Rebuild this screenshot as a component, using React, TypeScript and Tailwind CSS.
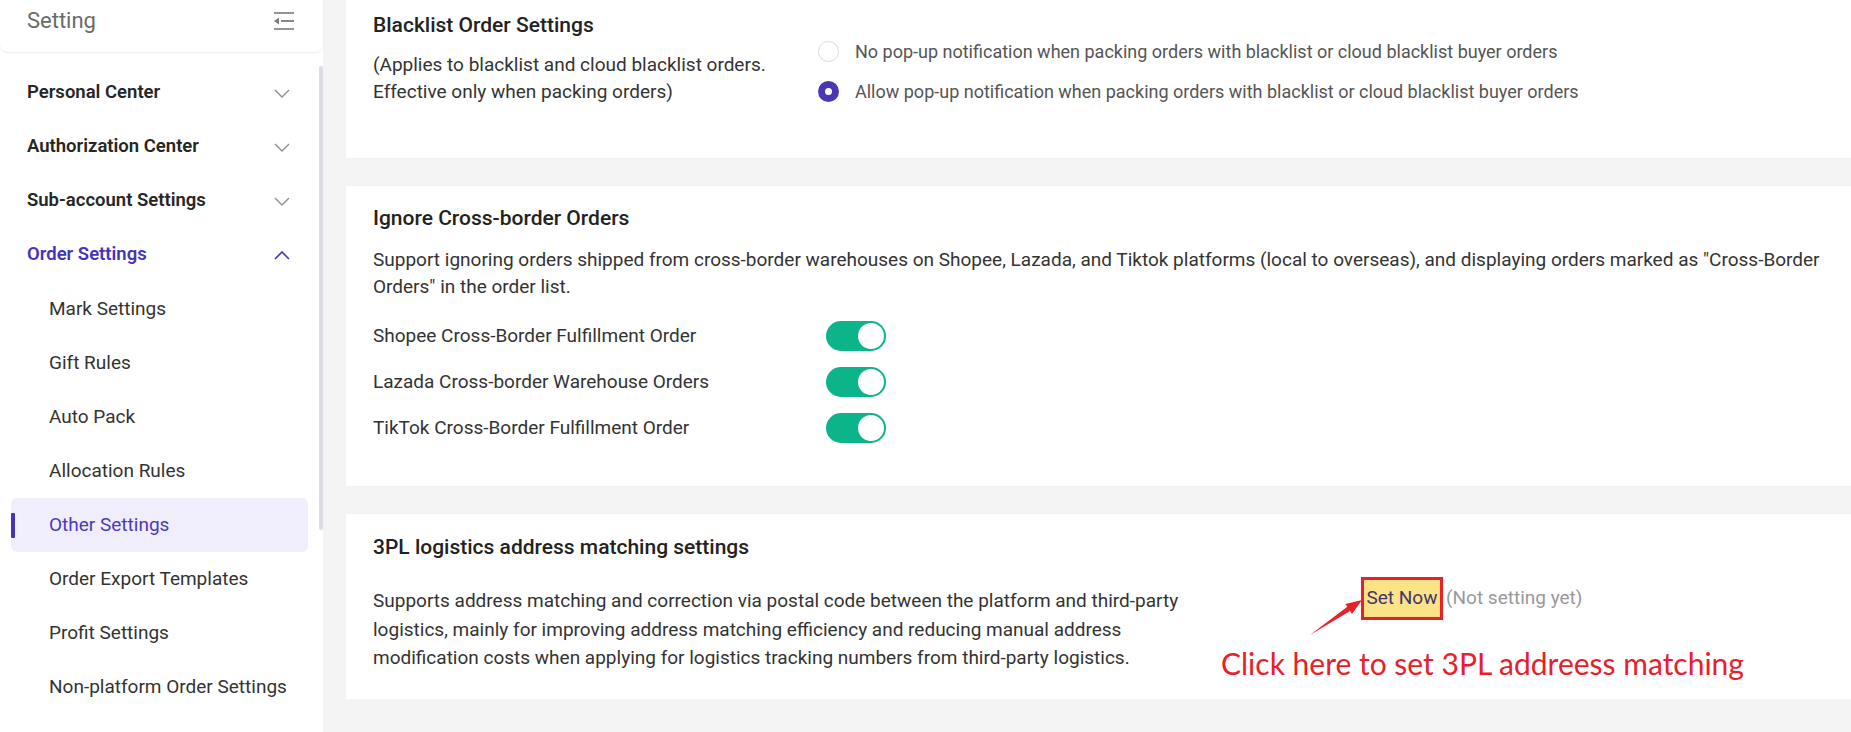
import React from "react";

const ChevronDown = () => (
  <svg width="16" height="9" viewBox="0 0 16 9" fill="none">
    <path d="M1 1l7 7 7-7" stroke="currentColor" strokeWidth="1.3" />
  </svg>
);
const ChevronUp = () => (
  <svg width="16" height="9" viewBox="0 0 16 9" fill="none">
    <path d="M1 8l7-7 7 7" stroke="currentColor" strokeWidth="1.6" />
  </svg>
);

const CollapseIcon = () => (
  <svg width="20" height="18" viewBox="0 0 20 18" fill="none">
    <path d="M0 1h20" stroke="#7a7a7a" strokeWidth="1.6" />
    <path d="M0 17h20" stroke="#7a7a7a" strokeWidth="1.6" />
    <path d="M7 9h13" stroke="#7a7a7a" strokeWidth="1.8" />
    <path d="M0 9l5-3.5v7z" fill="#7a7a7a" />
  </svg>
);

const Toggle = () => (
  <div className="flex h-[30px] w-[60px] items-center justify-end rounded-full bg-[#0cb489] pr-[2px]">
    <div className="h-[26px] w-[26px] rounded-full bg-white" />
  </div>
);

const topMenu = ["Personal Center", "Authorization Center", "Sub-account Settings"];
const subMenu = [
  "Mark Settings",
  "Gift Rules",
  "Auto Pack",
  "Allocation Rules",
  "Other Settings",
  "Order Export Templates",
  "Profit Settings",
  "Non-platform Order Settings",
];

export default function App() {
  return (
    <div className="flex h-[732px] w-[1851px] overflow-hidden bg-[#f4f4f4] font-['Roboto','Noto_Sans',sans-serif]">
      {/* Sidebar */}
      <aside className="w-[323px] shrink-0 bg-white">
        <div className="flex h-[52px] items-start justify-between rounded-b-[8px] pl-[27px] pr-[29px] pt-[8px] shadow-[0_1px_2px_rgba(0,0,0,0.08)]">
          <span className="text-[22px] leading-[26px] text-[#6a6a6a]">Setting</span>
          <div className="pt-[4px]">
            <CollapseIcon />
          </div>
        </div>
        <div className="flex">
          <nav className="mt-[14px] w-[319px] px-[11px]">
            {topMenu.map((t) => (
              <div key={t} className="flex h-[54px] items-center justify-between pl-[16px] pr-[18px]">
                <span className="text-[18.5px] font-semibold text-[#262626]">{t}</span>
                <span className="text-[#8c8c8c]">
                  <ChevronDown />
                </span>
              </div>
            ))}
            <div className="flex h-[54px] items-center justify-between pl-[16px] pr-[18px]">
              <span className="text-[18.5px] font-semibold text-[#4634b8]">Order Settings</span>
              <span className="text-[#4634b8]">
                <ChevronUp />
              </span>
            </div>
            {subMenu.map((t) => {
              const active = t === "Other Settings";
              return (
                <div
                  key={t}
                  className={
                    active
                      ? "flex h-[54px] items-center rounded-[6px] bg-[#f0eefc]"
                      : "flex h-[54px] items-center"
                  }
                >
                  <div className={active ? "h-[25px] w-[4px] rounded-[1px] bg-[#4634b8]" : "h-[25px] w-[4px]"} />
                  <span className={active ? "ml-[34px] text-[19px] text-[#4a3ac0]" : "ml-[34px] text-[19px] text-[#333]"}>
                    {t}
                  </span>
                </div>
              );
            })}
          </nav>
          <div className="mt-[14px] h-[464px] w-[4px] rounded-full bg-[#dcdce3]" />
        </div>
      </aside>

      {/* Main */}
      <main className="flex flex-1 flex-col gap-[28px] pl-[23px]">
        {/* Card 1 */}
        <section className="flex h-[158px] bg-white pl-[27px] pt-[12px]">
          <div className="w-[445px] shrink-0">
            <h2 className="text-[21px] font-medium leading-[26px] text-[#222]">Blacklist Order Settings</h2>
            <p className="mt-[13px] text-[19px] leading-[27px] text-[#333]">
              (Applies to blacklist and cloud blacklist orders.
              <br />
              Effective only when packing orders)
            </p>
          </div>
          <div className="pt-[19px]">
            <div className="flex h-[40px] items-center">
              <div className="h-[21px] w-[21px] rounded-full border border-[#d9d9d9] bg-white" />
              <span className="ml-[16px] text-[18px] text-[#555]">
                No pop-up notification when packing orders with blacklist or cloud blacklist buyer orders
              </span>
            </div>
            <div className="flex h-[40px] items-center">
              <div className="flex h-[21px] w-[21px] items-center justify-center rounded-full bg-[#4a37b6]">
                <div className="h-[7px] w-[7px] rounded-full bg-white" />
              </div>
              <span className="ml-[16px] text-[18px] text-[#555]">
                Allow pop-up notification when packing orders with blacklist or cloud blacklist buyer orders
              </span>
            </div>
          </div>
        </section>

        {/* Card 2 */}
        <section className="bg-white pb-[35px] pl-[27px] pr-[27px] pt-[19px]">
          <h2 className="text-[21px] font-medium leading-[26px] text-[#222]">Ignore Cross-border Orders</h2>
          <p className="mt-[15px] text-[19px] leading-[27px] text-[#333]">
            Support ignoring orders shipped from cross-border warehouses on Shopee, Lazada, and Tiktok platforms (local to
            overseas), and displaying orders marked as "Cross-Border Orders" in the order list.
          </p>
          <div className="mt-[13px]">
            {[
              "Shopee Cross-Border Fulfillment Order",
              "Lazada Cross-border Warehouse Orders",
              "TikTok Cross-Border Fulfillment Order",
            ].map((t) => (
              <div key={t} className="flex h-[46px] items-center">
                <span className="w-[453px] text-[19px] text-[#333]">{t}</span>
                <Toggle />
              </div>
            ))}
          </div>
        </section>

        {/* Card 3 */}
        <section className="relative h-[185px] bg-white pl-[27px] pt-[20px]">
          <h2 className="text-[21px] font-medium leading-[26px] text-[#222]">3PL logistics address matching settings</h2>
          <div className="mt-[27px] flex">
            <p className="w-[840px] text-[19px] leading-[28.5px] text-[#333]">
              Supports address matching and correction via postal code between the platform and third-party logistics,
              mainly for improving address matching efficiency and reducing manual address modification costs when
              applying for logistics tracking numbers from third-party logistics.
            </p>
            <div className="ml-[148px] flex items-center self-start">
              <div className="mt-[-10px] flex h-[43px] w-[82px] items-center justify-center border-[3px] border-[#e8202a] bg-[#fde388]">
                <span className="text-[19px] text-[#3f3668]">Set Now</span>
              </div>
              <span className="ml-[3px] mt-[-10px] text-[19px] text-[#999]">(Not setting yet)</span>
            </div>
          </div>

          {/* annotation arrow */}
          <svg
            className="absolute left-[959px] top-[81px]"
            width="62"
            height="45"
            viewBox="0 0 62 45"
          >
            <polygon points="5,40 42.3,11.8 40.4,8.9 57,5 47,18.9 45.1,16" fill="#e8202a" />
          </svg>
          <span className="absolute left-[875px] top-[129px] font-['Lato',sans-serif] text-[30px] leading-[40px] text-[#e8202a]">
            Click here to set 3PL addreess matching
          </span>
        </section>
      </main>
    </div>
  );
}
